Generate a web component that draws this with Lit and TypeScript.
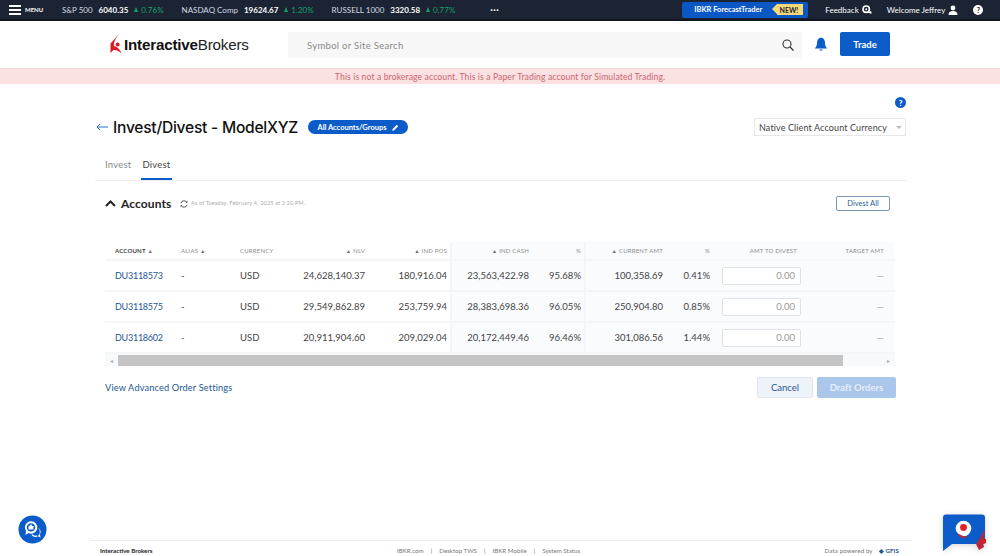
import { LitElement, html, css, svg } from "lit";
import { customElement } from "lit/decorators.js";

const rows = [
  ["DU3118573", "24,628,140.37", "180,916.04", "23,563,422.98", "95.68%", "100,358.69", "0.41%"],
  ["DU3118575", "29,549,862.89", "253,759.94", "28,383,698.36", "96.05%", "250,904.80", "0.85%"],
  ["DU3118602", "20,911,904.60", "209,029.04", "20,172,449.46", "96.46%", "301,086.56", "1.44%"],
];

const quotes = [
  ["S&P 500", "6040.35", "0.76%"],
  ["NASDAQ Comp", "19624.67", "1.20%"],
  ["RUSSELL 1000", "3320.58", "0.77%"],
];

const logoMark = svg`<path d="M9 0 L0.5 9.5 L0.5 19 L3.5 16 Q8 15.5 11.5 19.5 Q9.5 13.5 4.2 12 Q2.6 8 9 0 Z" fill="#d81f26"/><circle cx="7.6" cy="10.4" r="2" fill="#d81f26"/>`;

@customElement("app-root")
export class AppRoot extends LitElement {
  static styles = css`
    :host { display: flex; flex-direction: column; width: 1000px; height: 556px; overflow: hidden; background: #fff; font-family: "Lato", "Liberation Sans", sans-serif; color: #333; position: relative; }
    svg { display: block; flex: none; }
    .top { height: 19px; background: #1c2434; border-bottom: 2px solid #11161f; display: flex; align-items: center; color: #fff; font-size: 8px; flex: none; }
    .burger { margin-left: 9px; width: 12px; display: flex; flex-direction: column; gap: 2px; }
    .burger i { display: block; height: 2px; background: #fff; }
    .menu { margin-left: 4px; font-size: 6px; font-weight: 700; width: 37px; }
    .quotes { display: flex; gap: 18px; }
    .quote { display: flex; align-items: center; gap: 6px; }
    .quote .name { color: #d5d9e0; }
    .quote b { font-weight: 700; }
    .up { color: #12a06a; display: flex; align-items: center; gap: 3px; }
    .tri { width: 0; height: 0; border-left: 2.5px solid transparent; border-right: 2.5px solid transparent; border-bottom: 5px solid #12a06a; }
    .dots { margin-left: 35px; font-weight: 700; font-size: 9px; letter-spacing: 0.5px; line-height: 8px; }
    .ft { margin-left: 183px; width: 126px; height: 16px; box-sizing: border-box; background: #0c57c6; border-radius: 2px; display: flex; align-items: center; justify-content: space-between; padding: 0 5px 0 12px; font-weight: 700; font-size: 7.5px; }
    .new { background: #f8d978; color: #1c2434; height: 11px; display: flex; align-items: center; padding: 0 5px 0 3px; position: relative; margin-left: 8px; font-size: 7px; }
    .new::before { content: ""; position: absolute; left: -5px; top: 0; border-top: 5.5px solid transparent; border-bottom: 5.5px solid transparent; border-right: 5px solid #f8d978; }
    .tr { display: flex; align-items: center; gap: 3px; }
    .fb { margin-left: 17px; }
    .wl { margin-left: 15px; }
    .qm { margin-left: 15px; width: 10px; height: 10px; background: #fff; border-radius: 50%; color: #1c2434; font-size: 7px; font-weight: 900; display: flex; align-items: center; justify-content: center; }
    .head { height: 47px; display: flex; align-items: flex-start; padding-top: 10px; box-sizing: border-box; flex: none; }
    .logo { margin-left: 110px; width: 178px; display: flex; align-items: center; margin-top: 1px; height: 24px; }
    .logo span { margin-left: 2px; font-family: "Liberation Sans", sans-serif; font-size: 15.2px; color: #222; letter-spacing: -0.2px; }
    .logo b { font-weight: 700; color: #111; }
    .search { width: 514px; height: 26px; background: #f7f7f7; display: flex; align-items: center; justify-content: space-between; box-sizing: border-box; padding: 0 8px 0 19px; color: #8a8a8a; font-size: 9.5px; letter-spacing: 0.3px; margin-top: 1px; }
    .bell { margin-left: 12px; margin-top: 6px; }
    .trade { margin-left: 12px; margin-top: 1px; width: 50px; height: 24px; background: #0b5bc8; color: #fff; font-size: 9.5px; font-weight: 700; border-radius: 2px; display: flex; align-items: center; justify-content: center; }
    .banner { height: 16px; background: #fce1e2; border-top: 1px solid #f1d9da; color: #c8666f; font-size: 8.6px; display: flex; align-items: center; justify-content: center; letter-spacing: 0.12px; flex: none; box-sizing: border-box; }
    .main { flex: 1; padding: 13px 93px 0 95px; min-height: 0; display: flex; flex-direction: column; }
    .help-row { display: flex; justify-content: flex-end; padding-right: 1px; height: 12px; }
    .help { width: 11px; height: 11px; border-radius: 50%; background: #0b5bc8; color: #fff; font-size: 8px; font-weight: 900; display: flex; align-items: center; justify-content: center; }
    .title-row { display: flex; align-items: center; height: 18px; margin-top: 9px; }
    .back { margin-left: 1px; margin-right: 5px; }
    h1 { margin: 0; font-size: 15.6px; font-weight: 500; color: #111; font-family: "Inter", "Lato", sans-serif; letter-spacing: -0.25px; white-space: nowrap; width: 186px; }
    .pill { margin-left: 9px; width: 100px; height: 14px; background: #0b5bc8; color: #fff; border-radius: 7px; font-size: 7.5px; font-weight: 700; display: flex; align-items: center; justify-content: center; gap: 5px; }
    .select { margin-left: auto; margin-right: 1px; width: 152px; height: 18px; box-sizing: border-box; border: 1px solid #e8e8e8; font-size: 9px; display: flex; align-items: center; justify-content: space-between; padding: 0 3px 0 4px; color: #444; letter-spacing: 0.12px; }
    .caret { width: 0; height: 0; border-left: 3px solid transparent; border-right: 3px solid transparent; border-top: 3px solid #bbb; }
    .tabs { display: flex; margin-top: 19px; border-bottom: 1px solid #eeeeee; padding-left: 8px; }
    .tab { height: 25px; box-sizing: border-box; padding: 4px 0 0 2px; font-size: 9.5px; line-height: 12px; color: #888; letter-spacing: 0.2px; width: 38px; }
    .tab.on { color: #444; border-bottom: 2px solid #0b5bc8; width: 31px; padding-left: 0; text-align: center; }
    .sec { display: flex; align-items: center; height: 15px; margin-top: 15px; padding-left: 10px; padding-right: 17px; }
    .sec h2 { margin: 0 0 0 5px; font-size: 12px; font-weight: 700; color: #222; width: 59px; letter-spacing: 0.1px; }
    .asof { margin-left: 3px; font-size: 5.5px; color: #aaa; letter-spacing: 0.18px; margin-top: -2px; }
    .divall { margin-left: auto; width: 54px; height: 15px; box-sizing: border-box; border: 1px solid #7b99b3; border-radius: 2px; color: #2a5f97; font-size: 7.5px; display: flex; align-items: center; justify-content: center; }
    .table { margin: 31px 0 0 10px; width: 790px; }
    .row { display: grid; grid-template-columns: 76px 59px 50px 75px 87px 77px 57px 77px 47px 91px 83px 10px; }
    .row > div { display: flex; align-items: center; white-space: nowrap; box-sizing: border-box; }
    .row > div:first-child { padding-left: 10px; }
    .r { justify-content: flex-end; }
    .pr { padding-right: 3px; }
    .pd { padding-right: 4px; }
    .sh { background: #f9fbfd; }
    .bl { border-right: 2px solid #f3f5f7; }
    .hd { height: 17px; font-size: 6px; color: #8d8d8d; letter-spacing: 0.2px; border-bottom: 2px solid #f3f5f7; box-sizing: content-box; }
    .hd .dark { color: #444; font-weight: 700; }
    .hd .t { font-size: 5px; margin: 0 2px; color: #666; }
    .bd { height: 29px; font-size: 9.5px; color: #444; border-bottom: 2px solid #f3f5f7; box-sizing: content-box; }
    .row > .acct { color: #1d5794; font-size: 9px; letter-spacing: -0.25px; }
    .input { width: 80px; height: 18px; margin-left: 12px; background: #fff; border: 1px solid #dfe2e6; border-radius: 2px; box-sizing: border-box; color: #999; padding-right: 5px; display: flex; align-items: center; justify-content: flex-end; }
    .dash { color: #aaa; }
    .sb { height: 12px; background: #f8f9fa; display: flex; align-items: center; }
    .sb .a { width: 13px; color: #aaa; font-size: 6px; text-align: center; flex: none; }
    .sb .thumb { width: 725px; height: 11px; background: #c4c4c4; }
    .sb .rest { flex: 1; }
    .actions { display: flex; align-items: center; margin: 11px 11px 0 10px; height: 21px; }
    .link { color: #1d5794; font-size: 9.2px; letter-spacing: 0.16px; }
    .cancel, .draft { display: flex; align-items: center; justify-content: center; height: 21px; font-size: 9.5px; border-radius: 2px; box-sizing: border-box; }
    .cancel { margin-left: auto; width: 56px; background: #eef3f9; border: 1px solid #dfe6ef; color: #1d5794; }
    .draft { margin-left: 4px; width: 79px; background: #aac6ea; color: #e5eefa; font-weight: 700; }
    .foot { margin: 0 88px 0 90px; height: 16px; border-top: 1px solid #eeeeee; flex: none; display: flex; align-items: center; font-size: 6.2px; color: #777; padding: 3px 0 0 10px; box-sizing: border-box; }
    .foot b { color: #222; font-weight: 700; width: 297px; }
    .foot .links { display: flex; gap: 7px; }
    .foot .pw { margin-left: auto; margin-right: 13px; display: flex; align-items: center; gap: 6px; letter-spacing: 0.1px; }
    .gfis { color: #1d5794; font-weight: 700; }
    .chat-l { position: absolute; left: 18px; top: 515px; }
    .chat-r { position: absolute; left: 943px; top: 514px; filter: drop-shadow(0 1px 3px rgba(0,0,0,0.18)); }
  `;

  render() {
    return html`
      <div class="top">
        <div class="burger"><i></i><i></i><i></i></div>
        <div class="menu">MENU</div>
        <div class="quotes">
          ${quotes.map(q => html`<div class="quote"><span class="name">${q[0]}</span><b>${q[1]}</b><span class="up"><i class="tri"></i>${q[2]}</span></div>`)}
        </div>
        <div class="dots">···</div>
        <div class="ft">IBKR ForecastTrader<span class="new">NEW!</span></div>
        <div class="tr fb">Feedback
          <svg width="10" height="10" viewBox="0 0 10 10"><circle cx="4.2" cy="4.2" r="3.2" fill="none" stroke="#fff" stroke-width="1.6"/><circle cx="4.2" cy="4.2" r="1" fill="#fff"/><path d="M6 7.5 Q8 9 9.8 8.2 L9 6 Z" fill="#fff"/></svg>
        </div>
        <div class="tr wl">Welcome Jeffrey
          <svg width="10" height="10" viewBox="0 0 10 10"><circle cx="5" cy="3" r="2.4" fill="#fff"/><path d="M0.5 10 Q0.5 6 5 6 Q9.5 6 9.5 10 Z" fill="#fff"/></svg>
        </div>
        <div class="qm">?</div>
      </div>

      <div class="head">
        <div class="logo">
          <svg width="12" height="20" viewBox="0 0 12 20">${logoMark}</svg>
          <span><b>Interactive</b>Brokers</span>
        </div>
        <div class="search">Symbol or Site Search
          <svg width="12" height="12" viewBox="0 0 12 12"><circle cx="5" cy="5" r="4" fill="none" stroke="#333" stroke-width="1.1"/><path d="M8 8 L11.5 11.5" stroke="#333" stroke-width="1.2"/></svg>
        </div>
        <svg class="bell" width="14" height="15" viewBox="0 0 14 15"><path d="M7 0.5 C4 1 3 3.5 3 6 C3 9 2 10 0.8 11.5 L13.2 11.5 C12 10 11 9 11 6 C11 3.5 10 1 7 0.5 Z" fill="#0b5bc8"/><path d="M5.3 12.5 A1.8 1.8 0 0 0 8.7 12.5 Z" fill="#0b5bc8"/></svg>
        <div class="trade">Trade</div>
      </div>

      <div class="banner">This is not a brokerage account. This is a Paper Trading account for Simulated Trading.</div>

      <div class="main">
        <div class="help-row"><div class="help">?</div></div>
        <div class="title-row">
          <svg class="back" width="12" height="8" viewBox="0 0 12 8"><path d="M12 4 H1 M4 1 L1 4 L4 7" fill="none" stroke="#2a6fc9" stroke-width="1"/></svg>
          <h1>Invest/Divest - ModelXYZ</h1>
          <div class="pill">All Accounts/Groups
            <svg width="7" height="7" viewBox="0 0 7 7"><path d="M0.3 6.7 L0.6 5 L4.8 0.8 L6.2 2.2 L2 6.4 Z" fill="#fff"/></svg>
          </div>
          <div class="select">Native Client Account Currency<i class="caret"></i></div>
        </div>
        <div class="tabs">
          <div class="tab">Invest</div>
          <div class="tab on">Divest</div>
        </div>
        <div class="sec">
          <svg width="11" height="7" viewBox="0 0 11 7"><path d="M1 6 L5.5 1.5 L10 6" fill="none" stroke="#222" stroke-width="2"/></svg>
          <h2>Accounts</h2>
          <svg width="8" height="8" viewBox="0 0 8 8"><path d="M1 3.2 A3 3 0 0 1 6.5 2.2 M7 4.8 A3 3 0 0 1 1.5 5.8" fill="none" stroke="#444" stroke-width="0.9"/><path d="M5.5 2.8 L7.5 2.8 L7.2 0.8 Z M2.5 5.2 L0.5 5.2 L0.8 7.2 Z" fill="#444"/></svg>
          <span class="asof">As of Tuesday, February 4, 2025 at 2:20 PM.</span>
          <div class="divall">Divest All</div>
        </div>
        <div class="table">
          <div class="row hd">
            <div class="dark">ACCOUNT<span class="t">▲</span></div>
            <div>ALIAS<span class="t">▲</span></div>
            <div>CURRENCY</div>
            <div class="r"><span class="t">▲</span>NLV</div>
            <div class="r pr bl"><span class="t">▲</span>IND POS</div>
            <div class="r sh"><span class="t">▲</span>IND CASH</div>
            <div class="r pr sh bl">%</div>
            <div class="r sh"><span class="t">▲</span>CURRENT AMT</div>
            <div class="r sh">%</div>
            <div class="r sh pd">AMT TO DIVEST</div>
            <div class="r sh">TARGET AMT</div>
            <div class="sh"></div>
          </div>
          ${rows.map(r => html`
            <div class="row bd">
              <div class="acct">${r[0]}</div>
              <div>-</div>
              <div>USD</div>
              <div class="r">${r[1]}</div>
              <div class="r pr bl">${r[2]}</div>
              <div class="r sh">${r[3]}</div>
              <div class="r pr sh bl">${r[4]}</div>
              <div class="r sh">${r[5]}</div>
              <div class="r sh">${r[6]}</div>
              <div class="sh"><div class="input">0.00</div></div>
              <div class="r sh dash">—</div>
              <div class="sh"></div>
            </div>`)}
          <div class="sb">
            <div class="a">◂</div>
            <div class="thumb"></div>
            <div class="rest"></div>
            <div class="a">▸</div>
          </div>
        </div>
        <div class="actions">
          <div class="link">View Advanced Order Settings</div>
          <div class="cancel">Cancel</div>
          <div class="draft">Draft Orders</div>
        </div>
      </div>

      <div class="foot">
        <b>Interactive Brokers</b>
        <div class="links"><span>IBKR.com</span><span>|</span><span>Desktop TWS</span><span>|</span><span>IBKR Mobile</span><span>|</span><span>System Status</span></div>
        <div class="pw">Data powered by <span class="gfis">◆ GFIS</span></div>
      </div>

      <svg class="chat-l" width="29" height="29" viewBox="0 0 29 29">
        <circle cx="14.5" cy="14.5" r="14" fill="#0b5bc8"/>
        <path d="M13 6.2 A6.2 6.2 0 1 1 10.5 18 L7.5 20 L8 15.8 A6.2 6.2 0 0 1 13 6.2 Z" fill="#fff"/>
        <circle cx="13" cy="12.4" r="4.2" fill="#0b5bc8"/>
        <path d="M10.5 11.5 L13.5 9 L13.8 11 L15.8 11 L15.2 14.5 L10.5 14.5 Z" fill="#fff"/>
        <path d="M20 13 A4.8 4.8 0 0 1 19.5 21 L22.5 22.5 L22 19 A4.5 4.5 0 0 0 21 13.5 Z M13.5 20 A5 5 0 0 0 19.5 21.5 L19 20.3 A4 4 0 0 1 14.5 19.3 Z" fill="#fff"/>
      </svg>
      <svg class="chat-r" width="43" height="38" viewBox="0 0 43 38">
        <path d="M3 0.5 H39 Q42 0.5 42 3.5 V28 Q42 30 39 30 H9 L0 37 V3.5 Q0 0.5 3 0.5 Z" fill="#0b5bc8"/>
        <circle cx="20.5" cy="14.5" r="7.8" fill="#fff"/>
        <circle cx="20.5" cy="13.5" r="3.4" fill="#e01f26"/>
        <path d="M13.5 18 Q18 23 25 22 L21 24 Q16 24 13.5 18 Z" fill="#c9252d"/>
        <path d="M42 15 L37 24 L33 30 L36 36 L41 33 L40 29 Z" fill="#b8263b"/>
        <circle cx="41" cy="27" r="2.6" fill="#d81f26"/>
      </svg>
    `;
  }
}
